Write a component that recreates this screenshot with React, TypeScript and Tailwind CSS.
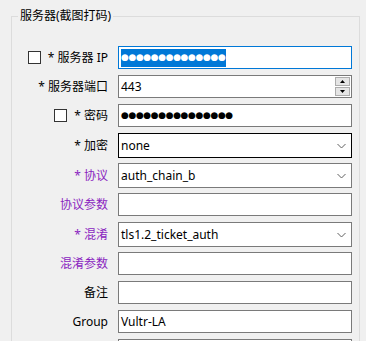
import React from "react";

const FONT = '"Noto Sans", "Noto Sans CJK SC", sans-serif';

function Chevron() {
  return (
    <svg width="9" height="5" viewBox="0 0 9 5" className="absolute right-[5px] top-1/2 -translate-y-1/2">
      <polyline points="0.5,0.5 4.5,4.5 8.5,0.5" fill="none" stroke="#606060" strokeWidth="1" />
    </svg>
  );
}

function Spinner() {
  return (
    <div className="absolute right-[1px] top-[1px] bottom-[1px] w-[15px] flex flex-col gap-[1px]">
      <div className="flex-1 bg-[#e5e5e5] border border-[#adadad] flex items-center justify-center">
        <svg width="5" height="3" viewBox="0 0 5 3"><polygon points="2.5,0 5,3 0,3" fill="#000" /></svg>
      </div>
      <div className="flex-1 bg-[#e5e5e5] border border-[#adadad] flex items-center justify-center">
        <svg width="5" height="3" viewBox="0 0 5 3"><polygon points="0,0 5,0 2.5,3" fill="#000" /></svg>
      </div>
    </div>
  );
}

function Check() {
  return <span className="inline-block w-[13px] h-[13px] border border-[#333] bg-white shrink-0" />;
}

type Row = {
  label: string;
  purple?: boolean;
  check?: boolean;
  kind: "text" | "combo" | "spin";
  value?: React.ReactNode;
  mt: string;
  border?: string;
};

export default function App() {
  const rows: Row[] = [
    {
      label: "* 服务器 IP",
      check: true,
      kind: "text",
      mt: "mt-0",
      border: "border-[#0078d7]",
      value: (
        <span className="bg-[#0078d7] text-white h-[18px] flex items-center tracking-[-0.4px] pr-[1px] text-[9px] leading-none" style={{ fontFamily: '"DejaVu Sans", sans-serif' }}>
          ●●●●●●●●●●●●●●
        </span>
      ),
    },
    { label: "* 服务器端口", kind: "spin", value: "443", mt: "mt-[6px]" },
    {
      label: "* 密码",
      check: true,
      kind: "text",
      mt: "mt-[6px]",
      value: (
        <span className="text-black h-[18px] flex items-center tracking-[-0.4px] text-[9px] leading-none" style={{ fontFamily: '"DejaVu Sans", sans-serif' }}>
          ●●●●●●●●●●●●●●●
        </span>
      ),
    },
    { label: "* 加密", kind: "combo", value: "none", mt: "mt-[6px]", border: "border-black" },
    { label: "* 协议", purple: true, kind: "combo", value: "auth_chain_b", mt: "mt-[5px]" },
    { label: "协议参数", purple: true, kind: "text", mt: "mt-[5px]" },
    { label: "* 混淆", purple: true, kind: "combo", value: "tls1.2_ticket_auth", mt: "mt-[6px]" },
    { label: "混淆参数", purple: true, kind: "text", mt: "mt-[5px]" },
    { label: "备注", kind: "text", mt: "mt-[6px]" },
    { label: "Group", kind: "text", value: "Vultr-LA", mt: "mt-[6px]" },
    { label: "", kind: "text", mt: "mt-[6px]" },
  ];

  return (
    <div className="w-[366px] h-[341px] overflow-hidden bg-[#f0f0f0] text-[12px] text-black" style={{ fontFamily: FONT }}>
      <div className="pt-[16px] pl-[11px]">
        <div className="relative w-[349px] h-[400px] border border-[#dcdcdc] pt-[29px]">
          <div className="absolute -top-[10px] left-[6px] px-[2px] bg-[#f0f0f0] leading-[18px] text-[12px]">
            服务器(截图打码)
          </div>
          <div className="flex flex-col">
            {rows.map((r, i) => {
              const h = r.kind === "combo" ? "h-[25px]" : "h-[23px]";
              const b = r.border ?? "border-[#7a7a7a]";
              return (
                <div key={i} className={`flex items-center ${r.mt}`}>
                  <div
                    className={`w-[106px] pr-[10px] flex items-center justify-end gap-[7px] leading-[16px] ${r.purple ? "text-[#8a1fc0]" : "text-black"}`}
                  >
                    {r.check && <Check />}
                    <span className="whitespace-nowrap">{r.label}</span>
                  </div>
                  <div className={`relative w-[234px] ${h} bg-white border ${b} flex items-center pl-[2px] whitespace-nowrap leading-[16px]`}>
                    {r.value}
                    {r.kind === "combo" && <Chevron />}
                    {r.kind === "spin" && <Spinner />}
                  </div>
                </div>
              );
            })}
          </div>
        </div>
      </div>
    </div>
  );
}
